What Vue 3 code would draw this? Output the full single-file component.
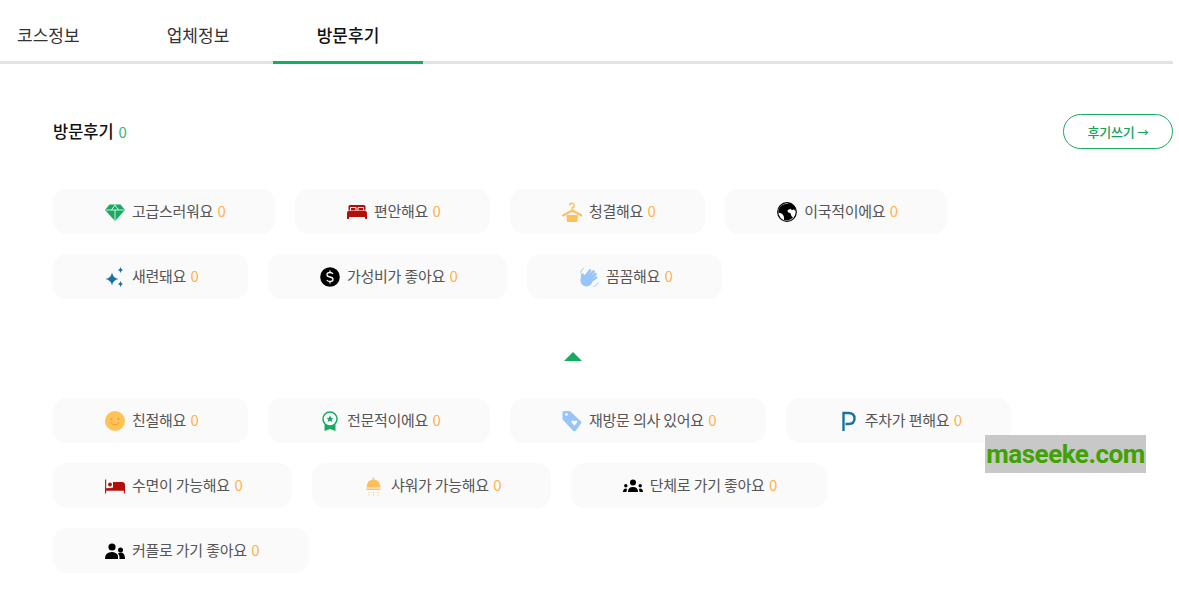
<script setup>
const tabs = [
  { label: '코스정보', active: false },
  { label: '업체정보', active: false },
  { label: '방문후기', active: true },
]
const topRows = [
  [
    { icon: 'gem', label: '고급스러워요' },
    { icon: 'bed', label: '편안해요' },
    { icon: 'hanger', label: '청결해요' },
    { icon: 'globe', label: '이국적이에요' },
  ],
  [
    { icon: 'sparkle', label: '새련돼요' },
    { icon: 'dollar', label: '가성비가 좋아요' },
    { icon: 'hands', label: '꼼꼼해요' },
  ],
]
const bottomRows = [
  [
    { icon: 'smile', label: '친절해요' },
    { icon: 'award', label: '전문적이에요' },
    { icon: 'tag', label: '재방문 의사 있어요' },
    { icon: 'parking', label: '주차가 편해요' },
  ],
  [
    { icon: 'sleep', label: '수면이 가능해요' },
    { icon: 'shower', label: '샤워가 가능해요' },
    { icon: 'group', label: '단체로 가기 좋아요' },
  ],
  [{ icon: 'couple', label: '커플로 가기 좋아요' }],
]
const groups = [topRows, bottomRows]
</script>

<template>
  <div class="page">
    <nav class="tabs">
      <a v-for="t in tabs" :key="t.label" class="tab" :class="{ active: t.active }">{{ t.label }}</a>
    </nav>

    <section class="content">
      <header class="head">
        <h2 class="title">방문후기 <span class="total">0</span></h2>
        <button class="write">후기쓰기 <span class="arrow">→</span></button>
      </header>

      <template v-for="(rows, gi) in groups" :key="gi">
        <div class="toggle" v-if="gi === 1"><span class="tri"></span></div>
        <div class="rows">
          <div v-for="(row, ri) in rows" :key="ri" class="row">
            <div v-for="c in row" :key="c.label" class="chip">
              <svg class="ico" viewBox="0 0 20 20">
                <template v-if="c.icon === 'gem'">
                  <path d="M4.500 2.500h11L20 8 10 19 0 8z" fill="#17ab62" />
                  <path d="M1 8h18M6.500 8L10 3l3.500 5M10 8v10" stroke="#fff" stroke-width=".8" fill="none" />
                </template>
                <template v-else-if="c.icon === 'bed'">
                  <path d="M1.500 4.500q0-1.500 1.500-1.500h14q1.500 0 1.500 1.500v4h-17z" fill="#b30f0a" />
                  <path d="M0 10.500q0-1.500 1.500-1.500h17q1.500 0 1.500 1.500v4.500h-20z" fill="#b30f0a" />
                  <path d="M3.500 8.500v-3h5.500v3M11 8.500v-3h5.500v3" fill="none" stroke="#fafafa" stroke-width="1" />
                  <path d="M0 15h2v2H0zM18 15h2v2h-2z" fill="#b30f0a" />
                </template>
                <template v-else-if="c.icon === 'hanger'">
                  <path d="M7.500 3.500a2.300 2.300 0 1 1 2.800 2.300v2.700" fill="none" stroke="#ffbf5a" stroke-width="1.500" />
                  <path d="M1 13.500l9.300-5 9.200 5" fill="none" stroke="#ffbf5a" stroke-width="2" stroke-linecap="round" />
                  <path d="M4.500 13h11.500l-.6 7.500H5.100z" fill="#ffbf5a" />
                </template>
                <template v-else-if="c.icon === 'globe'">
                  <circle cx="10" cy="10" r="9.300" fill="#fff" stroke="#000" stroke-width="1.200" />
                  <path d="M11 1.800q-5 0-8 3-2 3-1.500 6 3 0 4.500 2t1 5.200q2 .6 4.500.2 3-.8 4.500-3l-1.500-1-1-3-2.500-1-.5-2 3-1.500 1.500 1.500 2-1q.5 1.500 2 2 0-3-2-5.500-2.500-2.500-6-2.900z" fill="#000" />
                </template>
                <template v-else-if="c.icon === 'sparkle'">
                  <path d="M7 5.500q1 5.500 6.500 6.500Q8 13 7 18.500 6 13 .5 12 6 11 7 5.500z" fill="#17729f" />
                  <path d="M15.500 0q.5 2.500 2.500 3-2 .5-2.500 3-.5-2.500-2.500-3 2-.5 2.500-3zM15.500 14q.5 2.500 2.500 3-2 .5-2.500 3-.5-2.500-2.500-3 2-.5 2.500-3z" fill="#17729f" />
                </template>
                <template v-else-if="c.icon === 'dollar'">
                  <circle cx="10" cy="10" r="9.800" fill="#000" />
                  <path d="M13 6.800Q12 5.500 10 5.500 7 5.500 7 7.700 7 9.500 10 10t3 2.400Q13 14.500 10 14.500q-2.200 0-3.200-1.500M10 3.500v2M10 14.500v2" fill="none" stroke="#fff" stroke-width="1.300" />
                </template>
                <template v-else-if="c.icon === 'hands'">
                  <circle cx="7.500" cy="13.500" r="6" fill="#97c4fb" />
                  <path d="M6 10l5-6.500M8 11l6.500-6.500M10 12.500l6.500-5.500M11 15l6-4.500M3 12.500l.5-5" stroke="#97c4fb" stroke-width="2.700" stroke-linecap="round" fill="none" />
                  <path d="M1.500 6Q2 2.500 5 1M14.500 19.500Q18 19 19.500 15.500" fill="none" stroke="#97c4fb" stroke-width=".9" />
                </template>
                <template v-else-if="c.icon === 'smile'">
                  <circle cx="10" cy="10" r="10" fill="#ffc257" />
                  <circle cx="6.500" cy="8" r="1" fill="#ee9f2e" />
                  <circle cx="13.500" cy="8" r="1" fill="#ee9f2e" />
                  <path d="M5.500 11.500q4.500 4.500 9 0" fill="none" stroke="#ee9f2e" stroke-width="1" />
                </template>
                <template v-else-if="c.icon === 'award'">
                  <circle cx="10" cy="8" r="7" fill="#fff" stroke="#17ab62" stroke-width="1.500" />
                  <path d="M10 4.300l1.100 2.400 2.500.2-1.900 1.700.6 2.500-2.300-1.300-2.300 1.300.6-2.500-1.900-1.700 2.500-.2z" fill="#17ab62" />
                  <path d="M4.500 13.500q5.500 3.500 11 0V20l-5.500-2-5.500 2z" fill="#17ab62" />
                </template>
                <template v-else-if="c.icon === 'tag'">
                  <path d="M.5 1.500q0-1.500 1.500-1.500h5q1 0 2 1l10 9.500q.8 1 0 2l-5.500 7.500q-1 1-2 .2L1.500 9.500q-1-1-1-2z" fill="#97c4fb" />
                  <circle cx="4.500" cy="3.500" r="1.300" fill="#fff" />
                  <path d="M12.500 14.500l-3-3q-.8-1.500.6-2 1-.4 2.400.7.8-1.200 2.100-.6 1.400.8.200 2.100z" fill="#fff" />
                </template>
                <template v-else-if="c.icon === 'parking'">
                  <path d="M5.500 20V2h5q6 0 6 5.500t-6 5.500h-3" fill="none" stroke="#17729f" stroke-width="2.400" />
                </template>
                <template v-else-if="c.icon === 'sleep'">
                  <path d="M0 3.500h1.200v14H0zM20 10v7.500h-1.200v-3H1v-2z" fill="#c0201c" />
                  <circle cx="5" cy="8.500" r="1.900" fill="#b30f0a" />
                  <path d="M8 6h9q3 0 3 3v4H8z" fill="#b30f0a" />
                  <path d="M1 12.500h19V14.500H1z" fill="#b30f0a" />
                </template>
                <template v-else-if="c.icon === 'shower'">
                  <path d="M8.800 1.500h1.400v2q5.800.5 6.300 8H2.500q.5-7.500 6.300-8z" fill="#ffbf5a" />
                  <path d="M2.500 12.500h14v1.500h-14z" fill="#ffbf5a" />
                  <path d="M5 16v1M9.500 16v1M14 16v1M5 18.500v1M9.500 18.500v1M14 18.500v1" stroke="#ffbf5a" stroke-width="1" />
                </template>
                <template v-else-if="c.icon === 'group'">
                  <circle cx="10" cy="6.500" r="3" fill="#000" />
                  <path d="M5 16q0-5 5-5t5 5z" fill="#000" />
                  <circle cx="2.800" cy="9.800" r="1.700" fill="#000" />
                  <circle cx="17.200" cy="9.800" r="1.700" fill="#000" />
                  <path d="M0 16q0-3.500 3-3.500l1 .5-.6 3zM20 16q0-3.500-3-3.500l-1 .5.600 3z" fill="#000" />
                </template>
                <template v-else-if="c.icon === 'couple'">
                  <circle cx="7" cy="6" r="3.600" fill="#000" />
                  <path d="M0 18q0-7 7-7 4 0 6 3.500V18z" fill="#000" />
                  <circle cx="15.500" cy="9" r="2.500" fill="#000" />
                  <path d="M13 12.500q1-1 3-1 4 0 4 6.500h-5.500v-2q0-2-1.500-3.500z" fill="#000" />
                </template>
              </svg>
              <span class="label">{{ c.label }}</span>
              <span class="count">0</span>
            </div>
          </div>
        </div>
      </template>
    </section>

    <div class="mark">maseeke.com</div>
  </div>
</template>

<style>
html, body { margin: 0; background: #fff; }
</style>

<style scoped>
.page {
  position: relative;
  width: 1179px;
  height: 600px;
  overflow: hidden;
  font-family: "Noto Sans CJK KR", "Noto Sans", sans-serif;
  color: #222;
}
.tabs {
  display: flex;
  width: 1173px;
  height: 61px;
  border-bottom: 3px solid #e3e3e3;
}
.tab {
  flex: none;
  width: 150px;
  height: 64px;
  box-sizing: border-box;
  text-align: center;
  line-height: 70px;
  font-size: 17px;
  color: #333;
}
.tab:first-child { width: 123px; padding-left: 17px; text-align: left; }
.tab.active {
  font-weight: 500;
  color: #111;
  border-bottom: 3px solid #14ad62;
}
.content {
  width: 1120px;
  padding-left: 53px;
}
.head {
  display: flex;
  justify-content: space-between;
  align-items: center;
  padding-top: 50px;
  height: 35px;
  margin-bottom: 40px;
}
.title {
  margin: 0 0 2px;
  font-size: 16.500px;
  font-weight: 500;
  color: #111;
}
.total {
  font-weight: 400;
  font-size: 15px;
  margin-left: 1px;
  color: #3cb67c;
}
.write {
  width: 110px;
  height: 35px;
  border: 1px solid #17ab62;
  border-radius: 18px;
  background: #fff;
  color: #17a05c;
  font-family: inherit;
  font-size: 13px;
  font-weight: 500;
  letter-spacing: -0.2px;
  padding: 0;
}
.arrow { font-size: 11.500px; }
.rows { display: flex; flex-direction: column; gap: 20px; }
.row { display: flex; gap: 20px; }
.chip {
  display: flex;
  align-items: center;
  height: 45px;
  padding: 0 49.500px 0 52px;
  border-radius: 14px;
  background: #fafafa;
  font-size: 15px;
  letter-spacing: -0.3px;
  word-spacing: 0.3px;
  color: #555;
  white-space: nowrap;
}
.ico { width: 20px; height: 20px; flex: none; margin-right: 7px; }
.label, .count { padding-bottom: 2px; }
.count { margin-left: 4.500px; color: #ffb24d; }
.toggle {
  display: flex;
  justify-content: center;
  width: 1040px;
  padding: 53px 0 37px;
}
.tri {
  width: 0;
  height: 0;
  border-left: 9px solid transparent;
  border-right: 9px solid transparent;
  border-bottom: 9px solid #17ab62;
}
.mark {
  position: absolute;
  left: 985px;
  top: 435px;
  width: 161px;
  height: 38px;
  background: #c8c8c8;
  color: #3fa200;
  font-family: Roboto, sans-serif;
  font-weight: 700;
  font-size: 26px;
  letter-spacing: -0.5px;
  line-height: 38px;
  text-align: center;
  white-space: nowrap;
}
</style>
